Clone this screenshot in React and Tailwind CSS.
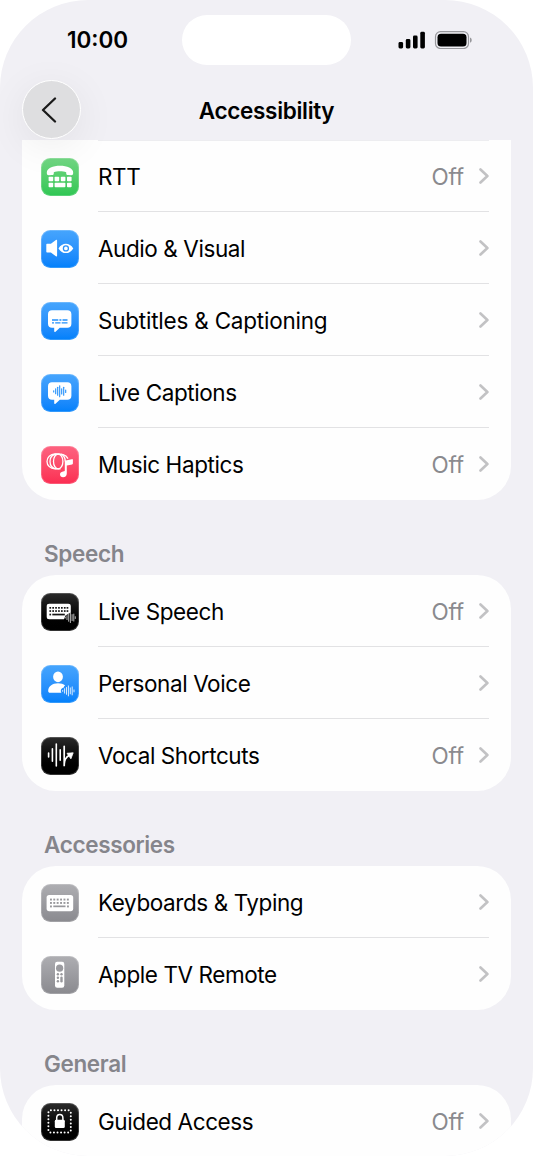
import React from "react";

function Tile({ className, children }) {
  return (
    <div
      className={`mt-px h-[38px] w-[38px] shrink-0 overflow-hidden rounded-[9.5px] bg-linear-to-b inset-ring inset-ring-white/20 ${className}`}
    >
      <svg viewBox="0 0 38 38" className="h-full w-full" fill="none">
        {children}
      </svg>
    </div>
  );
}

// Vertical bars centred on y: [x, half height]
function Bars({ bars, y, color, width = 1.1 }) {
  return (
    <g stroke={color} strokeWidth={width} strokeLinecap="round">
      {bars.map(([x, h]) => (
        <line key={x} x1={x} x2={x} y1={y - h} y2={y + h} />
      ))}
    </g>
  );
}

// Grid of small keys
function Keys({ xs, ys, size, color }) {
  return ys.map((y) =>
    xs.map((x) => (
      <rect key={`${x}-${y}`} x={x} y={y} width={size} height={size} fill={color} />
    ))
  );
}

const BLUE = "from-[#46a5fd] to-[#0080fb]";
const BLACK = "from-[#2b2b2b] to-[#000000]";
const GRAY = "from-[#aeaeb2] to-[#8a8a8f]";

function RttIcon() {
  return (
    <Tile className="from-[#71d683] to-[#2dc653]">
      <path
        d="M5.8 14.7C5.8 10 12 7.700 19 7.700s13.200 2.300 13.200 7c0 1.700-.6 2.500-2 2.500l-3-.1c-1.400 0-2-.7-2-1.900v-1c-1.700-.6-4-.9-6.200-.9s-4.500.3-6.200.9v1c0 1.200-.6 1.900-2 1.900l-3 .1c-1.400 0-2-.8-2-2.500z"
        fill="white"
      />
      {[7.6, 13.6, 19.8, 26].map((x) => (
        <rect key={x} x={x} y="18.7" width="4.6" height="4.6" rx="0.8" fill="white" />
      ))}
      <rect x="7.6" y="24.7" width="4.6" height="4.6" rx="0.8" fill="white" />
      <rect x="13.6" y="24.7" width="10.8" height="4.6" rx="0.8" fill="white" />
      <rect x="26" y="24.7" width="4.6" height="4.6" rx="0.8" fill="white" />
    </Tile>
  );
}

function AudioVisualIcon() {
  return (
    <Tile className={BLUE}>
      <path
        d="M6.3 13.7h3.6l5-3.8c.6-.4 1.2-.1 1.2.6v15.2c0 .7-.6 1-1.2.6l-5-3.8H6.3c-.6 0-1-.4-1-1v-6.8c0-.6.4-1 1-1z"
        fill="white"
      />
      <path d="M17.5 18.4c2-3.2 4.5-4.7 7.4-4.7s5.4 1.5 7.4 4.7c-2 3.2-4.5 4.7-7.4 4.7s-5.4-1.5-7.4-4.7z" fill="white" />
      <circle cx="24.9" cy="18.4" r="2.5" stroke="#2b92fc" strokeWidth="1.3" />
    </Tile>
  );
}

function Bubble() {
  return (
    <path
      d="M11 8.200h15.400c2.500 0 4 1.500 4 4v9.600c0 2.500-1.500 4-4 4h-7.600l-4.300 3.900c-.6.5-1.300.3-1.300-.5v-3.400H11c-2.500 0-4-1.500-4-4v-9.600c0-2.500 1.500-4 4-4z"
      fill="white"
    />
  );
}

function SubtitlesIcon() {
  return (
    <Tile className={BLUE}>
      <Bubble />
      <g stroke="#2290fc" strokeWidth="1.4">
        <path d="M11 18h6.3M18.4 18h2M21.5 18h5" />
        <path d="M11 20.9h2M14.2 20.9h5.3M20.7 20.9h5.8" />
      </g>
    </Tile>
  );
}

function LiveCaptionsIcon() {
  return (
    <Tile className={BLUE}>
      <Bubble />
      <Bars
        color="#2290fc"
        y={17.3}
        bars={[[12.7, 0.6], [14.7, 2.5], [16.7, 4], [18.7, 5.5], [20.7, 2.6], [22.7, 4], [24.7, 1.2]]}
      />
    </Tile>
  );
}

function MusicHapticsIcon() {
  return (
    <Tile className="from-[#fd6280] to-[#fb2c52]">
      <g stroke="white" strokeWidth="1.3">
        <path d="M14 8c-4.700.2-8 3.200-8 7.400s3.300 7.200 8 7.400" />
        <path d="M15.500 8c-3.900.5-6.500 3.400-6.500 7.400s2.600 6.900 6.500 7.400" />
        <ellipse cx="17.2" cy="15.4" rx="4.700" ry="7.400" />
        <path d="M14 8c7 0 10.500.3 13 4.600" />
        <path d="M20 8.200c2.800 1.200 4.200 3.800 4.200 7.200M14 22.800h5.500" />
      </g>
      <path
        d="M31.900 13.300v4.200c0 .5-.3.800-.8.900l-5.300 1.100v7.700c0 2.500-1.400 4.100-3.700 4.100-1.900 0-3.100-1.100-3.100-2.700 0-1.700 1.100-2.600 3-3l1.100-.3c.5-.1.700-.4.700-.9v-8.700c0-.6.300-1 .9-1.100l6-1.300c.8-.1 1.200-.1 1.200 0z"
        fill="white"
      />
    </Tile>
  );
}

function LiveSpeechIcon() {
  return (
    <Tile className={BLACK}>
      <path
        d="M8.200 10.700h19.100c1.700 0 2.500.8 2.500 2.500v6.200l-5.300 3.200-1.500 3.600H8.200c-1.700 0-2.500-.8-2.500-2.500V13.200c0-1.700.8-2.500 2.500-2.500z"
        fill="white"
      />
      <Keys xs={[8.4, 11.3, 14.2, 17.1, 20, 22.9, 25.6]} ys={[14, 17.2]} size={1.7} color="#161616" />
      <rect x="8.4" y="20.7" width="1.7" height="1.7" fill="#161616" />
      <rect x="11.3" y="20.7" width="12.5" height="1.7" fill="#161616" />
      <Bars
        color="#c9c9c9"
        y={24.6}
        width={0.9}
        bars={[[24.3, 0.4], [26, 2], [27.7, 3.7], [29.4, 5], [31.1, 3], [32.8, 3.5], [34.3, 0.9]]}
      />
    </Tile>
  );
}

function PersonalVoiceIcon() {
  return (
    <Tile className={BLUE}>
      <ellipse cx="17" cy="11.8" rx="4.9" ry="5.4" fill="white" />
      <path
        d="M7.200 25.800c0-4.300 4-7.600 9.800-7.600 3 0 5.400.8 7.200 2.200-.8.3-1.300 1-1.400 2-2 .4-3 1.600-3 3.300 0 .8.200 1.500.7 2.100H9.200c-1.400 0-2-.6-2-2z"
        fill="white"
      />
      <Bars
        color="#d8ebff"
        y={25.9}
        width={1}
        bars={[[21.7, 0.5], [23.6, 2.2], [25.5, 3.4], [27.4, 5], [29.3, 3], [31.2, 4], [33, 1]]}
      />
    </Tile>
  );
}

function VocalShortcutsIcon() {
  return (
    <Tile className={BLACK}>
      <Bars color="white" y={18} width={1.6} bars={[[7.6, 2], [11.4, 6.3], [15.3, 11], [19.2, 5.3]]} />
      <path d="M23.2 9.300v20c0-6 1-9.300 6.500-11.800" stroke="white" strokeWidth="1.700" strokeLinecap="round" />
      <path d="M26 16.300l6.200-.5-2.300 6z" fill="white" stroke="white" strokeWidth="0.8" strokeLinejoin="round" />
    </Tile>
  );
}

function KeyboardIcon() {
  return (
    <Tile className={GRAY}>
      <rect x="5.6" y="11" width="26.6" height="16.2" rx="2.6" fill="white" />
      <Keys xs={[9, 12.3, 15.7, 19.1, 22.5, 25.9]} ys={[14.6, 18]} size={1.9} color="#98989c" />
      <rect x="9" y="21.5" width="1.9" height="1.9" fill="#98989c" />
      <rect x="12.3" y="21.5" width="12.2" height="1.7" fill="#98989c" />
      <rect x="26" y="21.5" width="1.9" height="1.9" fill="#98989c" />
    </Tile>
  );
}

function RemoteIcon() {
  return (
    <Tile className={GRAY}>
      <rect x="14" y="5.8" width="9.3" height="26" rx="2.2" fill="white" />
      <circle cx="18.6" cy="12.2" r="3.6" fill="#9b9b9f" />
      <g fill="#98989c">
        <circle cx="16.9" cy="18.2" r="1.2" />
        <circle cx="20.5" cy="18.2" r="1.2" />
        <circle cx="16.9" cy="21.7" r="1.2" />
        <circle cx="16.9" cy="25.2" r="1.2" />
        <rect x="19.3" y="20.5" width="2.4" height="5.9" rx="1.2" />
      </g>
    </Tile>
  );
}

function GuidedAccessIcon() {
  return (
    <Tile className={BLACK}>
      <rect
        x="7.4"
        y="7.2"
        width="22.4"
        height="22.4"
        rx="2.5"
        stroke="white"
        strokeWidth="2"
        strokeLinecap="round"
        strokeDasharray="0 3.55"
      />
      <rect x="13.8" y="16.8" width="10" height="8.3" rx="1.4" fill="white" />
      <path d="M15.700 17.300v-2.400c0-2.200 1.300-3.500 3.100-3.500s3.100 1.300 3.100 3.500v2.400" stroke="white" strokeWidth="1.500" />
    </Tile>
  );
}

const hearing = [
  { name: "RTT", value: "Off", Icon: RttIcon },
  { name: "Audio & Visual", Icon: AudioVisualIcon },
  { name: "Subtitles & Captioning", Icon: SubtitlesIcon, tracking: "tracking-[-0.22px]" },
  { name: "Live Captions", Icon: LiveCaptionsIcon },
  { name: "Music Haptics", value: "Off", Icon: MusicHapticsIcon },
];

const speech = [
  { name: "Live Speech", value: "Off", Icon: LiveSpeechIcon },
  { name: "Personal Voice", Icon: PersonalVoiceIcon },
  { name: "Vocal Shortcuts", value: "Off", Icon: VocalShortcutsIcon },
];

const accessories = [
  { name: "Keyboards & Typing", Icon: KeyboardIcon },
  { name: "Apple TV Remote", Icon: RemoteIcon },
];

const general = [{ name: "Guided Access", value: "Off", Icon: GuidedAccessIcon }];

function Row({ item, divider }) {
  const { name, value, Icon, tracking = "tracking-[-0.42px]" } = item;
  return (
    <div className="flex h-[72px] items-center pl-[19px]">
      <Icon />
      <div
        className={`mr-[22px] ml-[19px] flex h-[72px] flex-1 items-center border-b pt-[3px] ${
          divider ? "border-[#e2e2e4]" : "border-transparent"
        }`}
      >
        <span className={`flex-1 text-[22.5px] text-black ${tracking}`}>{name}</span>
        {value && <span className="mr-[15px] text-[22.5px] tracking-[-0.2px] text-[#8a8a8e]">{value}</span>}
        <svg viewBox="0 0 10 16" className="mb-[3px] h-4 w-2.5" fill="none">
          <path
            d="M1.500 1.500L8.400 8l-6.900 6.500"
            stroke="#c2c2c4"
            strokeWidth="2.600"
            strokeLinecap="round"
            strokeLinejoin="round"
          />
        </svg>
      </div>
    </div>
  );
}

function Section({ title, items, className = "rounded-[34px]", openStart, openEnd }) {
  return (
    <section>
      {title && (
        <h2 className="flex h-[75px] items-end pb-[7px] pl-[22px] text-[22.5px] leading-7 font-[560] tracking-[-0.35px] text-[#85858b]">
          {title}
        </h2>
      )}
      <div className={`bg-[#fefefe] ${className}`}>
        {openStart && <div className="mr-[22px] -mb-px ml-[76px] h-px bg-[#ededf0]" />}
        {items.map((item, i) => (
          <Row key={item.name} item={item} divider={openEnd || i < items.length - 1} />
        ))}
      </div>
    </section>
  );
}

export default function App() {
  return (
    <div className="h-[1156px] w-[533px] overflow-hidden bg-white font-['Inter',sans-serif]">
      <div className="flex h-full flex-col overflow-hidden rounded-[88px] bg-[#f1f0f5]">
        {/* Status bar */}
        <div className="flex h-20 shrink-0 items-center pl-[67px]">
          <span className="w-[115px] text-[22.5px] font-[580]">10:00</span>
          <div className="h-[50px] w-[169px] rounded-full bg-white" />
          <svg viewBox="0 0 74 18" className="ml-[47px] h-[18px] w-[74px]" fill="none">
            <rect x="0.5" y="11" width="4.6" height="6.5" rx="1.4" fill="black" />
            <rect x="7.8" y="8" width="4.6" height="9.5" rx="1.4" fill="black" />
            <rect x="15" y="4.5" width="4.6" height="13" rx="1.4" fill="black" />
            <rect x="22.3" y="0.8" width="4.6" height="16.7" rx="1.4" fill="black" />
            <rect x="37.5" y="0.7" width="33" height="16.8" rx="5" stroke="#97979b" strokeWidth="1.2" />
            <rect x="39.5" y="2.8" width="29" height="12.6" rx="3.5" fill="black" />
            <path d="M72 6.400c2.300.8 2.300 4.600 0 5.400z" fill="#97979b" />
          </svg>
        </div>

        {/* Navigation bar */}
        <header className="relative z-10 flex h-[60px] shrink-0 items-center justify-center">
          <h1 className="pt-px text-[22.5px] font-[580] tracking-[-0.3px]">Accessibility</h1>
          <button className="absolute top-0 left-[22px] flex h-[59px] w-[59px] items-center justify-center rounded-full border-[1.5px] border-white bg-[#dedee0] shadow-[0_8px_40px_rgba(0,0,0,0.07)]">
            <svg viewBox="0 0 16 26" className="mr-[5px] h-[26px] w-4" fill="none">
              <path
                d="M14 1.500L2 13l12 11.500"
                stroke="#1a1a1a"
                strokeWidth="2.300"
                strokeLinecap="round"
                strokeLinejoin="round"
              />
            </svg>
          </button>
        </header>

        <main className="px-[22px]">
          <Section items={hearing} className="rounded-b-[34px]" openStart />
          <Section title="Speech" items={speech} />
          <Section title="Accessories" items={accessories} />
          <Section title="General" items={general} className="rounded-t-[34px]" openEnd />
        </main>
      </div>
    </div>
  );
}
